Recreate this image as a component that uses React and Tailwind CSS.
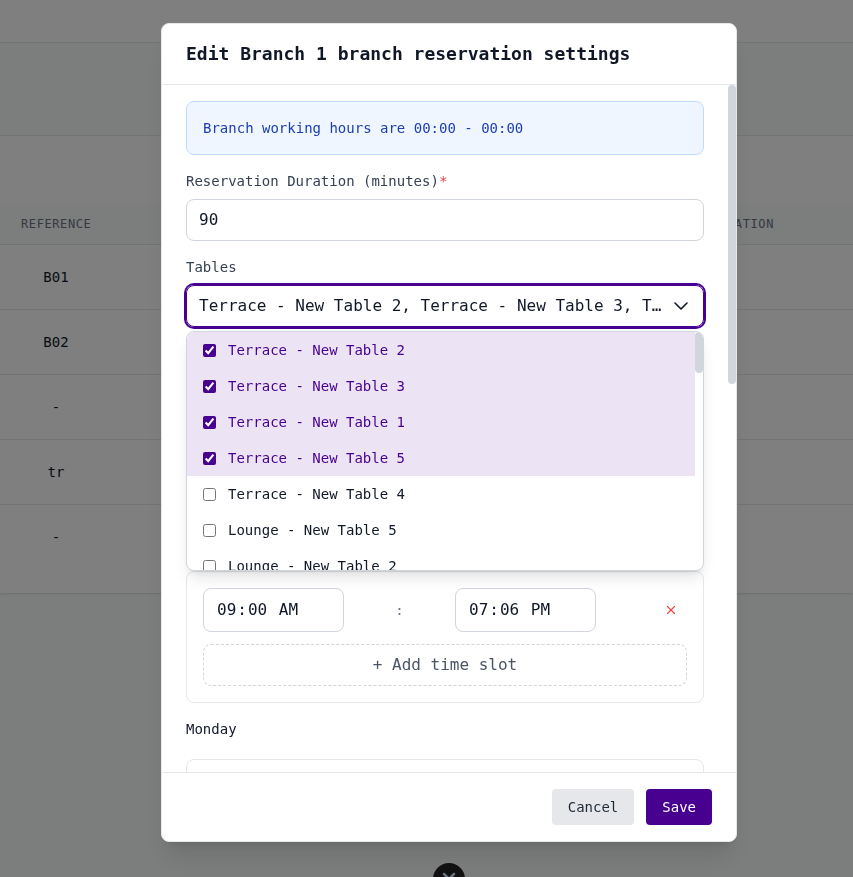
import React from 'react';
import { X } from 'lucide-react';

const rows = [
    { ref: 'B01', h: 'h-[65px]' },
    { ref: 'B02', h: 'h-[65px]' },
    { ref: '-', h: 'h-[65px]' },
    { ref: 'tr', h: 'h-[65px]' },
    { ref: '-', h: 'h-[88px]' },
];

const tables = [
    { name: 'Terrace - New Table 2', on: true },
    { name: 'Terrace - New Table 3', on: true },
    { name: 'Terrace - New Table 1', on: true },
    { name: 'Terrace - New Table 5', on: true },
    { name: 'Terrace - New Table 4', on: false },
    { name: 'Lounge - New Table 5', on: false },
    { name: 'Lounge - New Table 2', on: false },
];

const BackgroundPage = () => (
    <div className="h-[877px] bg-gray-50 overflow-hidden">
        <div className="h-[43px] bg-white border-b border-gray-200" />
        <div className="h-[93px] border-b border-gray-200" />
        <div className="h-[69px] bg-white" />
        <div className="bg-white shadow">
            <div className="h-[40px] pb-[2px] flex items-center justify-between px-[21px] pr-[79px] bg-gray-50 border-b border-gray-200 text-xs tracking-wider text-gray-500">
                <span>REFERENCE</span>
                <span>LOCATION</span>
            </div>
            {rows.map((row, i) => (
                <div key={i} className={`${row.h} ${i < rows.length - 1 ? 'border-b border-gray-200' : ''} text-sm text-gray-900`}>
                    <div className="w-[112px] text-center pt-[22px]">{row.ref}</div>
                </div>
            ))}
        </div>
    </div>
);

const TimeField = ({ value }) => (
    <input
        type="time"
        defaultValue={value}
        className="w-[141px] h-[44px] px-3 rounded-lg border border-gray-300 text-base text-gray-900 [&::-webkit-calendar-picker-indicator]:hidden"
    />
);

const DayCard = () => (
    <div className="rounded-lg border border-gray-200 p-4">
        <div className="flex items-center">
            <TimeField value="09:00" />
            <span className="w-[111px] text-center text-sm text-gray-500">:</span>
            <TimeField value="19:06" />
            <X className="ml-[68px] h-3.5 w-3.5 text-[#ef4444]" />
        </div>
        <div className="mt-3 h-[42px] flex items-center justify-center rounded-lg border border-dashed border-gray-300 text-base text-gray-600">
            + Add time slot
        </div>
    </div>
);

const TablesDropdown = () => (
    <div className="absolute left-0 right-0 top-[46px] h-[240px] bg-white rounded-lg border border-gray-300 shadow-lg overflow-hidden z-10">
        <div className="pr-2">
            {tables.map((t) => (
                <div key={t.name} className={`h-9 flex items-center gap-3 px-4 text-sm ${t.on ? 'bg-[#ece4f4] text-[#470090]' : 'text-gray-900'}`}>
                    <input type="checkbox" checked={t.on} readOnly className="h-[13px] w-[13px] m-0 accent-[#470090]" />
                    <span>{t.name}</span>
                </div>
            ))}
        </div>
        <div className="absolute right-0 top-0 h-[41px] w-2 rounded-full bg-gray-300" />
    </div>
);

const EditModal = () => (
    <div className="fixed inset-0 bg-black/50 flex justify-center items-start pt-[23px] pl-[45px]">
        <div className="relative w-[576px] h-[819px] flex flex-col bg-white rounded-lg border border-gray-200 shadow-xl overflow-hidden">
            <div className="h-[61px] shrink-0 flex items-center px-6 border-b border-gray-200">
                <h2 className="text-lg font-bold text-gray-900">Edit Branch 1 branch reservation settings</h2>
            </div>

            <div className="flex-1 overflow-hidden pl-6 pr-8 pt-4">
                <div className="h-[54px] flex items-center px-4 rounded-lg border border-[#bfdbfe] bg-[#eff6ff] text-sm text-[#1e40af]">
                    Branch working hours are 00:00 - 00:00
                </div>

                <div className="mt-[16px] h-5 flex items-center text-sm text-gray-700">
                    Reservation Duration (minutes)<span className="text-[#ef4444]">*</span>
                </div>
                <div className="mt-2 h-[42px] flex items-center px-3 rounded-lg border border-gray-300 text-base text-gray-900">
                    90
                </div>

                <div className="mt-4 h-5 flex items-center text-sm text-gray-700">Tables</div>
                <div className="relative mt-2">
                    <div className="h-[42px] flex items-center justify-between pl-3 pr-[15px] rounded-lg border border-[#470090] ring-2 ring-[#470090] text-base text-gray-900">
                        <span className="truncate">Terrace - New Table 2, Terrace - New Table 3, Terrace - New Table 1</span>
                        <svg className="ml-3 shrink-0" width="14" height="8" viewBox="0 0 14 8" fill="none" stroke="currentColor" strokeWidth="1.6" strokeLinecap="round" strokeLinejoin="round">
                            <path d="M1 1l6 6 6-6" />
                        </svg>
                    </div>
                    <TablesDropdown />
                </div>

                <div className="mt-[204px] h-5 flex items-center text-sm text-gray-900">Sunday</div>
                <div className="mt-5">
                    <DayCard />
                </div>

                <div className="mt-4 h-5 flex items-center text-sm text-gray-900">Monday</div>
                <div className="mt-5">
                    <DayCard />
                </div>
            </div>

            <div className="h-[69px] shrink-0 flex items-start justify-end gap-3 px-6 pt-4 border-t border-gray-200">
                <button type="button" className="h-9 px-4 rounded bg-gray-200 text-sm text-gray-800">Cancel</button>
                <button type="button" className="h-9 px-4 rounded bg-[#470090] text-sm text-white">Save</button>
            </div>

            <div className="absolute right-0 top-[61px] h-[299px] w-2 rounded-full bg-gray-300" />
        </div>
        <div className="absolute left-[433px] top-[863px] h-8 w-8 rounded-full bg-[#111] flex justify-center pt-[6px]">
            <X className="h-5 w-5 text-gray-500" strokeWidth={3} />
        </div>
    </div>
);

export default function App() {
    return (
        <div className="relative font-['DejaVu_Sans_Mono',monospace]">
            <BackgroundPage />
            <EditModal />
        </div>
    );
}
